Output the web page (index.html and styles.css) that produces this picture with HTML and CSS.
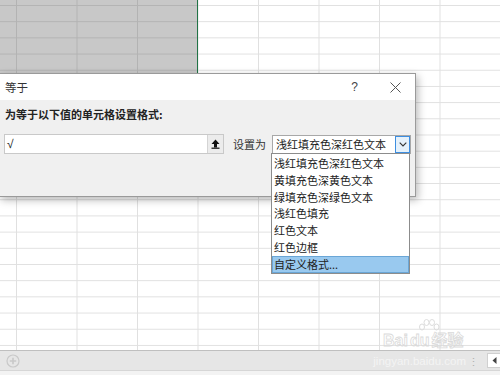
FILE: index.html
```html
<!DOCTYPE html>
<html>
<head>
<meta charset="utf-8">
<link rel="stylesheet" href="styles.css">
</head>
<body>
<div class="app">
  <div class="sheet">
    <div class="selection"></div>
    <div class="watermark">
      <svg class="paw" width="24" height="18" viewBox="0 0 24 18"><g fill="none" stroke="#dcdcdc" stroke-width="1"><ellipse cx="5" cy="8" rx="2.5" ry="3"/><ellipse cx="9.5" cy="3.5" rx="2.5" ry="3"/><ellipse cx="15" cy="3.5" rx="2.5" ry="3"/><ellipse cx="19.5" cy="8" rx="2.5" ry="3"/></g></svg>
      <span class="wm-logo">Bai<span class="wm-du">du</span>经验</span>
    </div>
  </div>
  <div class="tabbar">
    <svg class="add" width="14" height="14" viewBox="0 0 14 14"><circle cx="7" cy="7" r="6" fill="none" stroke="#c9c9c9" stroke-width="1.2"/><path d="M7 3.8v6.4M3.8 7h6.4" stroke="#c9c9c9" stroke-width="1.6"/></svg>
    <span class="wm-url">jingyan.baidu.com</span>
    <span class="dots">⋮</span>
    <div class="scroll-btn"><svg width="5" height="7" viewBox="0 0 5 7"><path d="M4.5 0V7L0.5 3.5Z" fill="#444"/></svg></div>
  </div>
  <div class="statusbar"></div>

  <div class="dialog">
    <div class="titlebar">
      <span class="title">等于</span>
      <span class="help">?</span>
      <svg class="close" width="11" height="11" viewBox="0 0 11 11"><path d="M0.5 0.5L10.5 10.5M10.5 0.5L0.5 10.5" stroke="#555" stroke-width="1"/></svg>
    </div>
    <div class="body">
      <div class="label">为等于以下值的单元格设置格式:</div>
      <div class="row">
        <div class="input">
          <span class="value">√</span>
          <div class="collapse"><svg width="9" height="10" viewBox="0 0 9 10"><path d="M4.5 0.5L8.5 5H6V8.5H3V5H0.5Z" fill="#111"/><rect x="0.5" y="8.6" width="8" height="1.2" fill="#111"/></svg></div>
        </div>
        <span class="setas">设置为</span>
        <div class="select">
          <span class="sel-text">浅红填充色深红色文本</span>
          <div class="sel-btn"><svg width="8" height="5" viewBox="0 0 8 5"><path d="M0.7 0.7L4 4L7.3 0.7" fill="none" stroke="#333" stroke-width="1.1"/></svg></div>
        </div>
      </div>
    </div>
  </div>

  <ul class="dropdown">
    <li>浅红填充色深红色文本</li>
    <li>黄填充色深黄色文本</li>
    <li>绿填充色深绿色文本</li>
    <li>浅红色填充</li>
    <li>红色文本</li>
    <li>红色边框</li>
    <li class="active">自定义格式...</li>
  </ul>
</div>
</body>
</html>
```
FILE: styles.css
```css
* { box-sizing: border-box; }
html, body { margin: 0; padding: 0; }
body {
  width: 500px;
  height: 375px;
  overflow: hidden;
  font-family: "Noto Sans CJK SC", "Noto Sans", sans-serif;
  font-size: 11px;
  color: #222;
  background: #fff;
}
.app {
  position: relative;
  width: 500px;
  height: 375px;
  display: flex;
  flex-direction: column;
}
.sheet {
  position: relative;
  height: 350px;
  flex-shrink: 0;
  background-color: #fff;
  background-image:
    linear-gradient(to right, #e0e0e0 0, #e0e0e0 1px, transparent 1px),
    linear-gradient(to bottom, #e0e0e0 0, #e0e0e0 1px, transparent 1px);
  background-size: 60.5px 16.2px, 60.5px 16.2px;
  background-position: 16px 0, 0 5px;
}
.selection {
  position: absolute;
  left: 0;
  top: 0;
  width: 198px;
  height: 73px;
  background-color: #c8c8c8;
  background-image:
    linear-gradient(to right, #b3b3b3 0, #b3b3b3 1px, transparent 1px),
    linear-gradient(to bottom, #b3b3b3 0, #b3b3b3 1px, transparent 1px);
  background-size: 60.5px 16.2px, 60.5px 16.2px;
  background-position: 16px 0, 0 5px;
  border-right: 1px solid #217346;
}
.watermark {
  position: absolute;
  left: 383px;
  top: 319px;
  width: 100px;
}
.paw {
  display: block;
  margin-left: 34px;
}
.wm-logo {
  display: block;
  margin-top: -5px;
  font-family: "Liberation Sans", "Noto Sans CJK SC", sans-serif;
  font-size: 16px;
  line-height: 18px;
  font-weight: bold;
  color: transparent;
  -webkit-text-stroke: 0.8px #dadada;
  white-space: nowrap;
}
.wm-du { margin-left: 2px; margin-right: 2px; }
.tabbar {
  position: relative;
  height: 20px;
  flex-shrink: 0;
  background: #e6e6e6;
  border-top: 1px solid #bfbfbf;
  display: flex;
  align-items: center;
  padding-left: 6px;
}
.add { display: block; }
.wm-url {
  margin-left: auto;
  font-family: "Liberation Sans", sans-serif;
  font-size: 11.5px;
  color: #f4f4f4;
}
.dots {
  color: #b0b0b0;
  font-size: 11px;
  margin: 0 8px 0 2px;
}
.scroll-btn {
  width: 13px;
  height: 15px;
  background: #fff;
  border: 1px solid #d0d0d0;
  border-right: none;
  display: flex;
  align-items: center;
  padding-left: 4px;
}
.statusbar {
  flex: 1;
  background: #f3f3f3;
  border-top: 1px solid #d6d6d6;
}
.dialog {
  position: absolute;
  left: -1px;
  top: 73px;
  width: 417px;
  height: 124px;
  background: #f0f0f0;
  border: 1px solid #9a9a9a;
  box-shadow: 2px 3px 8px rgba(0,0,0,0.28);
}
.titlebar {
  height: 26px;
  background: #fff;
  display: flex;
  align-items: center;
  padding-left: 5px;
}
.title { color: #333; font-size: 11.5px; }
.help {
  margin-left: auto;
  font-family: "Liberation Sans", sans-serif;
  font-size: 12px;
  color: #444;
  margin-right: 32px;
}
.close { margin-right: 14px; }
.body {
  padding: 5px 0 0 4px;
}
.label {
  font-weight: bold;
  color: #222;
  height: 18px;
  line-height: 18px;
  padding-left: 1px;
}
.row {
  margin-top: 11px;
  display: flex;
  align-items: center;
}
.input {
  flex-shrink: 0;
  width: 220px;
  height: 20px;
  background: #fff;
  border: 1px solid #c9c9c9;
  display: flex;
  align-items: center;
}
.value {
  flex: 1;
  padding-left: 2px;
  font-family: "Liberation Sans", sans-serif;
  font-size: 12px;
  color: #222;
}
.collapse {
  width: 16px;
  height: 18px;
  background: #ececec;
  border-left: 1px solid #d4d4d4;
  display: flex;
  align-items: center;
  justify-content: center;
}
.setas {
  margin-left: 9px;
  color: #333;
  white-space: nowrap;
}
.select {
  flex-shrink: 0;
  margin-left: 6px;
  width: 139px;
  height: 19px;
  background: #fff;
  border: 1px solid #a8a8a8;
  display: flex;
  align-items: center;
  padding-left: 3px;
}
.sel-text { flex: 1; color: #222; white-space: nowrap; overflow: hidden; }
.sel-btn {
  flex-shrink: 0;
  width: 15px;
  height: 17px;
  background: #e5f1fb;
  border: 1px solid #3d8ee0;
  display: flex;
  align-items: center;
  justify-content: center;
}
.dropdown {
  position: absolute;
  left: 271px;
  top: 153px;
  width: 139px;
  margin: 0;
  padding: 1px 0 0;
  list-style: none;
  background: #fff;
  border: 1px solid #8c8c8c;
}
.dropdown li {
  height: 16.8px;
  line-height: 16.8px;
  padding-left: 2px;
  color: #222;
  white-space: nowrap;
}
.dropdown li.active {
  background: #99c9ef;
  border: 1px solid #6aa6d6;
  line-height: 15px;
  padding-left: 1px;
}
```
